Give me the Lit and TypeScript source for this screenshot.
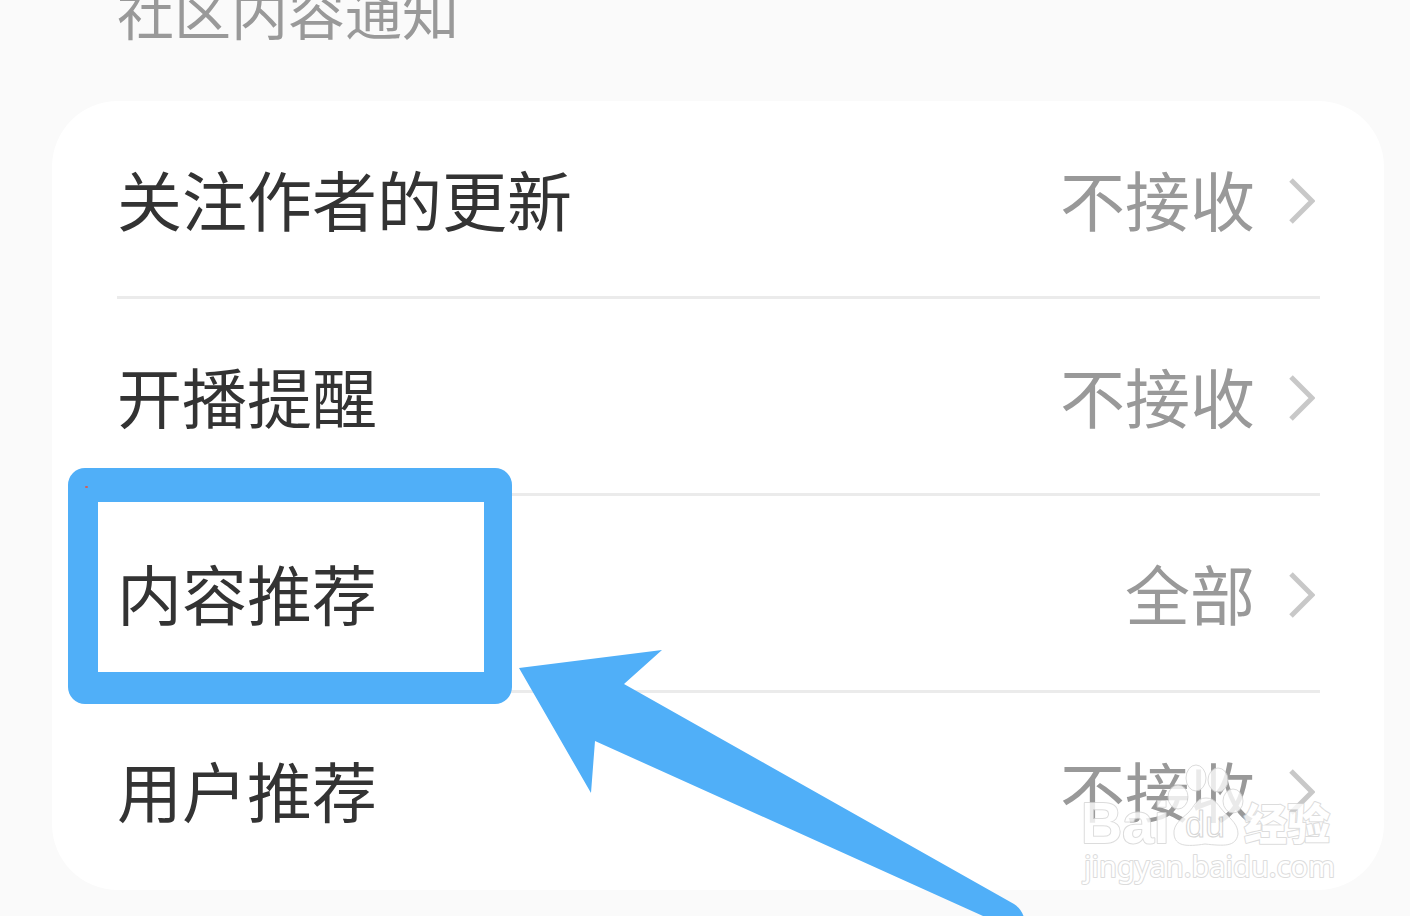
import { LitElement, html, css } from "lit";
import { customElement, property } from "lit/decorators.js";

@customElement("setting-row")
class SettingRow extends LitElement {
  @property() label = "";
  @property() value = "";

  static styles = css`
    :host {
      display: block;
      border-bottom: 3px solid #ebebeb;
    }
    :host(:last-of-type) {
      border-bottom-color: transparent;
    }
    .row {
      display: flex;
      align-items: center;
      width: 100%;
      height: 194px;
      padding: 0 5px 2px 0;
      border: 0;
      background: none;
      font: 400 65px/96px "Noto Sans CJK SC", sans-serif;
      color: #333;
      text-align: left;
      cursor: pointer;
    }
    .label {
      flex: 1;
    }
    .value {
      color: #999;
      margin-right: 34px;
    }
    .chevron {
      display: block;
      width: 26px;
      height: 46px;
      margin-top: 6px;
    }
  `;

  render() {
    return html`
      <button class="row" type="button">
        <span class="label">${this.label}</span>
        <span class="value">${this.value}</span>
        <svg class="chevron" viewBox="0 0 26 46" aria-hidden="true">
          <path d="M2 2L23 23L2 44" fill="none" stroke="#c8c8c8" stroke-width="5" />
        </svg>
      </button>
    `;
  }
}

@customElement("app-root")
class AppRoot extends LitElement {
  static styles = css`
    :host {
      display: block;
      position: relative;
      height: 100vh;
      overflow: hidden;
      background: #fafafa;
      font-family: "Noto Sans CJK SC", sans-serif;
    }
    .section {
      padding: 0 26px 0 52px;
    }
    .title {
      margin: -32px 0 49px;
      padding-left: 65px;
      font-size: 57px;
      font-weight: 400;
      line-height: 84px;
      color: #999;
    }
    .card {
      padding: 1px 64px 0 65px;
      border-radius: 66px;
      background: #fff;
    }
    .frame {
      position: absolute;
      left: 68px;
      top: 468px;
      box-sizing: border-box;
      width: 444px;
      height: 236px;
      border: solid #50aff8;
      border-width: 34px 28px 32px 30px;
      border-radius: 17px;
      pointer-events: none;
    }
    .frame::before {
      content: "";
      position: absolute;
      left: -13px;
      top: -16px;
      width: 3px;
      height: 2px;
      border-radius: 1px;
      background: #d0605c;
    }
    .arrow {
      position: absolute;
      left: 519px;
      top: 650px;
      width: 507px;
      height: 290px;
      pointer-events: none;
    }
    .watermark {
      position: absolute;
      right: 70px;
      top: 760px;
      width: 260px;
      height: 130px;
      pointer-events: none;
    }
    .ink {
      fill: #fff;
      stroke: #d4d4d4;
      stroke-width: 2;
      stroke-linejoin: round;
      paint-order: stroke;
      opacity: 0.8;
    }
    .pad {
      paint-order: normal;
      stroke-width: 1;
    }
    .brand {
      font: 700 57px "Liberation Sans", sans-serif;
    }
    .brand-du {
      font: 400 36px "Liberation Sans", sans-serif;
      paint-order: normal;
      stroke: #ccc;
      stroke-width: 1;
    }
    .brand-cn {
      font: 900 43px "Noto Sans CJK SC", sans-serif;
    }
    .site {
      font: 400 29px "Noto Sans", sans-serif;
    }
  `;

  private rows = [
    { label: "关注作者的更新", value: "不接收" },
    { label: "开播提醒", value: "不接收" },
    { label: "内容推荐", value: "全部" },
    { label: "用户推荐", value: "不接收" },
  ];

  render() {
    return html`
      <section class="section">
        <h2 class="title">社区内容通知</h2>
        <div class="card">
          ${this.rows.map(
            (r) => html`<setting-row .label=${r.label} .value=${r.value}></setting-row>`
          )}
        </div>
      </section>
      <div class="frame"></div>
      <svg class="arrow" viewBox="0 0 507 290" aria-hidden="true">
        <path
          d="M0 18L143 0L105 34L495 254Q506 261 506 276L500 280L464 266L76 91L72 143Z"
          fill="#50aff8"
        />
      </svg>
      <svg class="watermark" viewBox="0 0 260 130">
        <g class="ink">
          <ellipse class="pad" cx="98" cy="37" rx="10" ry="12" />
          <ellipse class="pad" cx="116" cy="18" rx="10" ry="13" />
          <ellipse class="pad" cx="138" cy="20" rx="10" ry="12" />
          <ellipse class="pad" cx="153" cy="41" rx="10" ry="12" />
          <text class="brand" x="1" y="83">Bai</text>
          <path
            class="pad"
            d="M126 38C116 38 115 46 108 53C101 59 93 65 94 74C95 86 106 87 125 84C144 86 156 87 158 74C158 65 152 60 145 53C138 46 136 38 126 38Z"
          />
          <text class="brand-du" x="105" y="77">du</text>
          <text class="brand-cn" x="164" y="80">经验</text>
          <text class="site" x="4" y="117">jingyan.baidu.com</text>
        </g>
      </svg>
    `;
  }
}
